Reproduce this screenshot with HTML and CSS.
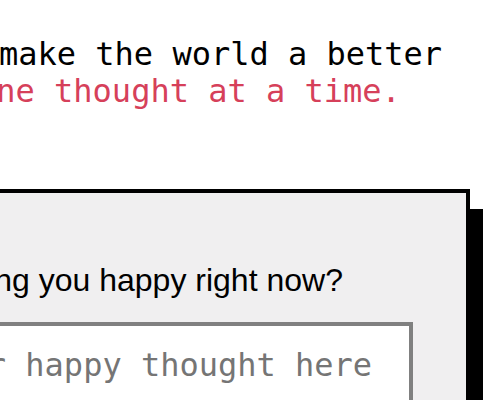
FILE: index.html
```html
<!DOCTYPE html>
<html lang="en">
<head>
<meta charset="utf-8">
<title>Happy thoughts</title>
<link rel="stylesheet" href="styles.css">
</head>
<body>
  <header class="hero">
    <p class="hero-line">make the world a better</p>
    <p class="hero-line hero-accent">one thought at a time.</p>
  </header>
  <main class="card">
    <form class="thought-form">
      <label class="prompt" for="thought">What's making you happy right now?</label>
      <textarea id="thought" class="thought-input" rows="3" placeholder="Your happy thought here"></textarea>
    </form>
  </main>
</body>
</html>
```
FILE: styles.css
```css
html, body {
  margin: 0;
  padding: 0;
  background: #fff;
  overflow: hidden;
  width: 500px;
  height: 400px;
}

.hero {
  padding-top: 36px;
  font-family: "DejaVu Sans Mono", monospace;
  font-size: 32px;
  line-height: 37px;
  color: #000;
  white-space: nowrap;
}

.hero-line {
  margin: 0 0 0 -1px;
}

.hero-accent {
  color: #d6405a;
  margin-left: -23px;
}

.card {
  margin-top: 79px;
  margin-left: -200px;
  width: 670px;
  box-sizing: border-box;
  border: 4px solid #000;
  background: #f0eff0;
  box-shadow: 13px 20px 0 #000;
  padding: 0 53px 40px 0;
  height: 400px;
}

.thought-form {
  display: flex;
  flex-direction: column;
  align-items: flex-end;
}

.prompt {
  margin-top: 69px;
  align-self: flex-start;
  margin-left: 17px;
  font-family: "Liberation Sans", Arial, sans-serif;
  font-size: 32px;
  white-space: nowrap;
  color: #000;
}

.thought-input {
  margin-top: 23px;
  width: 504px;
  box-sizing: border-box;
  border: 4px solid #808080;
  background: #fff;
  padding: 20px 16px 16px;
  font-family: "DejaVu Sans Mono", monospace;
  font-size: 32px;
  resize: none;
  outline: none;
}

.thought-input::placeholder {
  color: #757575;
}
```
